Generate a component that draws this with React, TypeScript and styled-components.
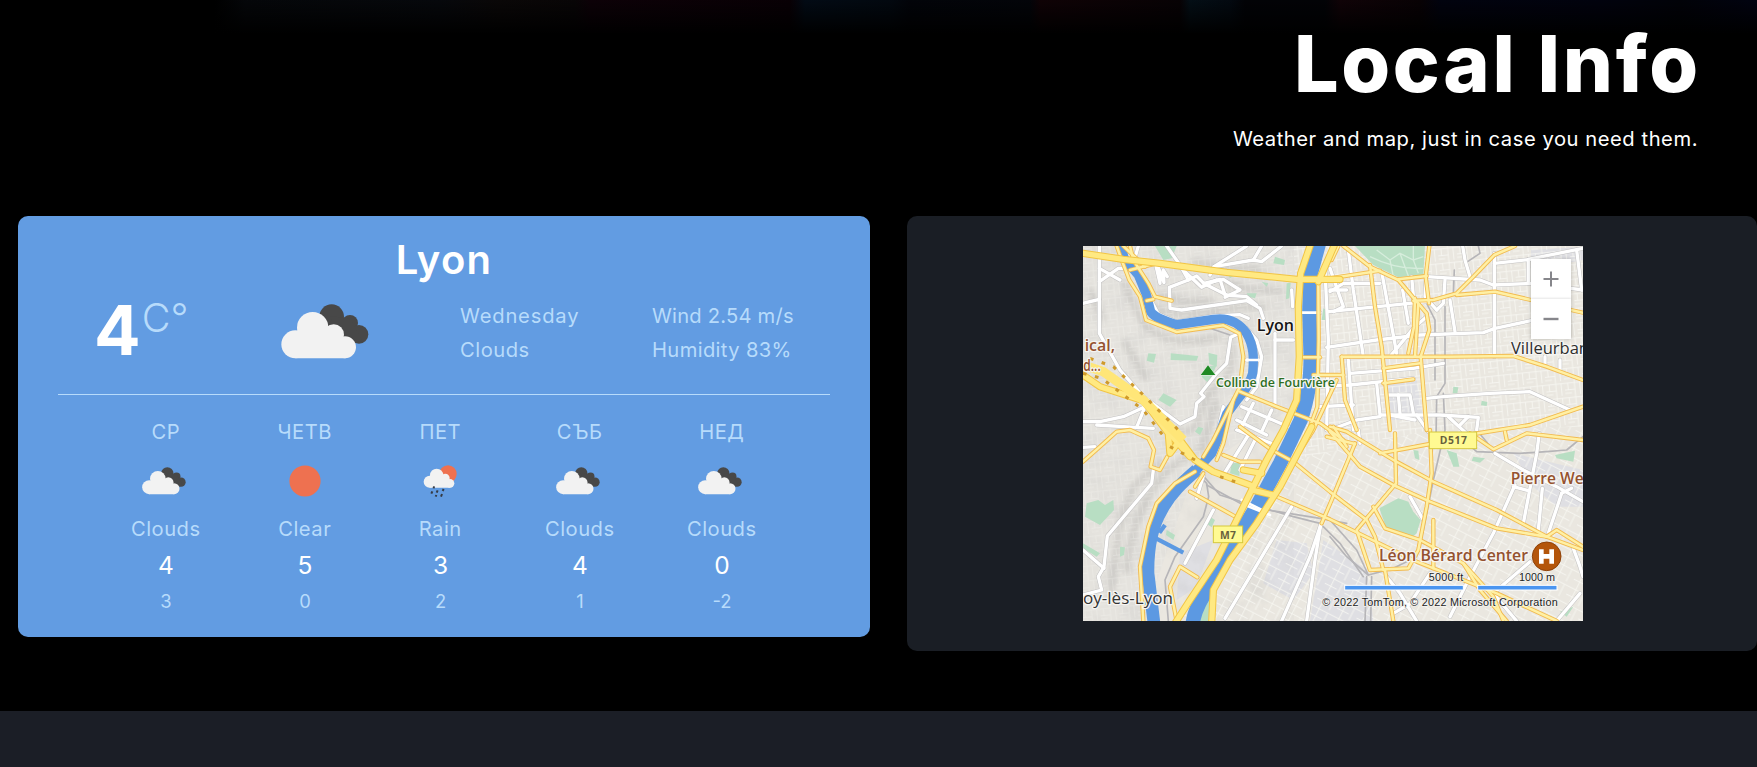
import React from 'react';
import styled, { createGlobalStyle } from 'styled-components';

const GlobalStyle = createGlobalStyle`
  * { box-sizing: border-box; }
  body {
    margin: 0;
    background: #000;
    color: #fff;
    font-family: Inter, "Open Sans", sans-serif;
    overflow: hidden;
  }
`;

const PALE = '#b7dbfb';

const Page = styled.main`
  height: 767px;
  display: flex;
  flex-direction: column;
  background:
    linear-gradient(to bottom, rgba(0, 0, 0, 0.1), #000 34px),
    linear-gradient(to right, #000 215px, #05070a 245px, #07090d 440px, #0b0808 500px, #090607 575px,
      #0e0108 590px, #090005 790px, #020c17 805px, #020911 890px, #02040a 910px, #03050a 1030px,
      #110206 1040px, #080205 1180px, #041018 1190px, #030a12 1230px, #020307 1245px, #020307 1325px,
      #120308 1340px, #090205 1420px, #010310 1440px, #01020f 1600px, #010209 1680px, #010312 1757px);
`;

const Header = styled.header`
  padding: 24px 59px 0 0;
  text-align: right;
`;

const Title = styled.h1`
  margin: 0 -3px 0 0;
  font-size: 79px;
  font-weight: 800;
  line-height: 78px;
  letter-spacing: 2.7px;
`;

const Subtitle = styled.p`
  margin: 22px 0 0;
  font-size: 20.2px;
  line-height: 30px;
  letter-spacing: 0.54px;
`;

const Cards = styled.section`
  display: flex;
  align-items: flex-start;
  gap: 37px;
  margin-top: 62px;
  padding-left: 18px;
`;

const WeatherCard = styled.article`
  width: 852px;
  height: 421px;
  padding: 20px 40px;
  border-radius: 10px;
  background: #629ce2;
`;

const City = styled.h2`
  margin: 0;
  font-size: 40px;
  font-weight: 600;
  line-height: 47px;
  letter-spacing: 1.3px;
  text-align: center;
`;

const Current = styled.div`
  display: grid;
  grid-template-columns: 185px 179px 192px auto;
  align-items: start;
  height: 112px;
  padding: 16px 0 0 38px;
  border-bottom: 1px solid ${PALE};
`;

const Temperature = styled.div`
  display: flex;
  align-items: flex-start;
  margin: -4px 0 0 -2px;
  font-size: 69px;
  font-weight: 700;
  line-height: 70px;
`;

const Unit = styled.span`
  margin: 3px 0 0 1px;
  font-size: 39.5px;
  font-weight: 300;
  line-height: 40px;
  color: ${PALE};
`;

const CurrentIcon = styled.div`
  margin-top: 5px;
  line-height: 0;
`;

const Detail = styled.div<{ $spacing: number }>`
  font-size: 20.2px;
  line-height: 34px;
  letter-spacing: ${(p) => p.$spacing}px;
  color: ${PALE};
`;

const Forecast = styled.div`
  display: grid;
  grid-template-columns: 72px 66px 65px 74px 70px;
  column-gap: 70px;
  padding: 22px 0 0 72px;
`;

const Day = styled.div`
  display: flex;
  flex-direction: column;
  align-items: center;
  white-space: nowrap;
`;

const DayText = styled.span`
  font-size: 20.2px;
  line-height: 30px;
  letter-spacing: 0.5px;
  margin-right: 0.5px;
  color: ${PALE};
`;

const DayIcon = styled.div<{ $nudge: number }>`
  display: flex;
  align-items: center;
  justify-content: center;
  height: 50px;
  margin: 9px 0 8px;
  padding-right: ${(p) => p.$nudge}px;
`;

const High = styled.span`
  margin-top: 3px;
  font-size: 24.5px;
  line-height: 36px;
`;

const Low = styled.span`
  margin-top: 4px;
  font-size: 18.4px;
  line-height: 28px;
  color: ${PALE};
`;

const MapCard = styled.article`
  display: flex;
  justify-content: center;
  width: 850px;
  height: 435px;
  padding: 30px 0;
  border-radius: 10px;
  background: #1a1e25;
`;

const MapFrame = styled.div`
  position: relative;
  width: 500px;
  height: 375px;
  margin-left: 2px;
  overflow: hidden;

  > svg { display: block; }
`;

const ZoomControls = styled.div`
  position: absolute;
  top: 13px;
  left: 448px;
  display: flex;
  flex-direction: column;
  box-shadow: 0 0 4px rgba(0, 0, 0, 0.22);
`;

const ZoomButton = styled.button`
  display: flex;
  align-items: center;
  justify-content: center;
  width: 40px;
  height: 40px;
  padding: 0;
  border: 0;
  background: #fff;

  & + & { box-shadow: 0 -1px 2px rgba(0, 0, 0, 0.1); }
`;

const FooterBand = styled.footer`
  flex: 1;
  margin-top: 60px;
  background: #1b1e26;
`;

function CloudsIcon({ width }: { width: number }) {
  return (
    <svg width={width} height={(width * 166) / 264} viewBox="841 314 264 166">
      <g fill="#484848">
        <circle cx="993" cy="352" r="37" />
        <circle cx="1048" cy="371" r="24" />
        <circle cx="1075" cy="405" r="28" />
        <path d="M990 350L1050 360L1085 425L1060 432L1000 400Z" />
      </g>
      <g fill="#f2f2f2">
        <circle cx="884" cy="435" r="42" />
        <circle cx="936" cy="385" r="47" />
        <circle cx="999" cy="406" r="31" />
        <circle cx="1033" cy="444" r="33" />
        <path d="M884 477V400H1000L1035 430V477Z" />
      </g>
    </svg>
  );
}

function ClearIcon() {
  return (
    <svg width="32" height="32" viewBox="0 0 32 32">
      <circle cx="16" cy="16" r="15.6" fill="#ee7150" />
    </svg>
  );
}

function RainIcon() {
  return (
    <svg width="34" height="33" viewBox="1270 192 102 99">
      <circle cx="1345" cy="219" r="26" fill="#ee7150" />
      <g fill="#f2f2f2">
        <circle cx="1290" cy="242" r="18" />
        <circle cx="1311" cy="223" r="20" />
        <circle cx="1337" cy="231" r="13" />
        <circle cx="1351" cy="247" r="13" />
        <path d="M1290 260V226H1337L1352 240V260Z" />
      </g>
      <path
        d="M1303 256l-1 6M1298 271l-3 7M1314 268l-3 7M1332 264l-3 6M1310 282l-2 5M1327 279l-3 8"
        stroke="#353a44"
        strokeWidth="6"
      />
    </svg>
  );
}

type Kind = 'Clouds' | 'Clear' | 'Rain';

const iconNudge: Record<Kind, number> = { Clouds: 5, Clear: 0, Rain: 1 };

const days: { name: string; kind: Kind; high: string; low: string }[] = [
  { name: 'СР', kind: 'Clouds', high: '4', low: '3' },
  { name: 'ЧЕТВ', kind: 'Clear', high: '5', low: '0' },
  { name: 'ПЕТ', kind: 'Rain', high: '3', low: '2' },
  { name: 'СЪБ', kind: 'Clouds', high: '4', low: '1' },
  { name: 'НЕД', kind: 'Clouds', high: '0', low: '-2' },
];

const SmallMapText = styled.text`
  font: 32.5px "Liberation Sans", Arial, sans-serif;
  fill: #222;
  stroke: #f4f3f0;
  stroke-width: 4px;
  paint-order: stroke;
`;

const PlaceLabel = styled.text<{ $color: string; $size: number; $weight?: number }>`
  font-family: "Open Sans", "Noto Sans", sans-serif;
  font-size: ${(p) => p.$size}px;
  font-weight: ${(p) => p.$weight ?? 400};
  fill: ${(p) => p.$color};
  stroke: #f6f5f2;
  stroke-width: 8px;
  stroke-linejoin: round;
  paint-order: stroke;
`;

const ShieldText = styled.text`
  font: 700 31px "Open Sans", sans-serif;
  fill: #67603c;
`;

const saone =
  'M122 10L132 55L175 105L198 160L212 215C225 235 260 245 290 254L400 238C440 232 475 245 500 280C520 315 523 350 518 400C510 430 495 450 475 475L440 522L412 600L395 640L340 700';
const saoneLower = 'M350 690C310 725 270 760 245 810C215 860 203 930 204 1000L222 1150';
const rhone =
  'M717 10L690 110L688 220L692 350C692 420 685 470 662 540L600 670L530 800L480 880L400 1020C375 1060 345 1100 338 1150';

const whiteRoads = [
  '58,18 58,280 120,390 190,470 300,552 345,530 350,490 372,470 362,460 410,400 440,370 452,292 500,270',
  '9,190 58,178', '58,125 115,85 140,85', '58,85 120,120', '175,18 160,70',
  '260,18 300,75 325,120 268,142 270,205 305,210 500,182 540,205 550,235',
  '325,120 350,108 372,130 420,118 435,165 500,170 530,195', '370,130 440,165',
  '390,105 402,80 500,18', '402,80 520,60 545,65 605,18', '520,60 545,18', '315,95 365,142 410,120',
  '400,125 430,118 480,150 435,172', '215,185 235,222 290,245 400,228 480,224 505,235',
  '228,78 240,130 236,85 252,128 250,90 262,110', '635,150 638,200', '585,280 585,500', '585,300 640,300',
  '9,545 60,545 130,530 195,500', '50,555 130,560 220,565', '195,500 170,562', '500,265 530,300 545,350 530,440 500,480',
  '485,500 625,560', '520,490 480,570', '575,510 545,575', '470,540 560,585', '410,590 430,500',
  '220,690 215,730 82,888 72,980 55,1010 65,1050 9,1065', '9,930 72,985', '9,622 45,620',
  '505,585 430,705', '525,600 480,690', '470,570 580,612', '350,775 372,700', '315,970 400,810',
  '635,800 435,1135', '722,855 690,950 605,1143', '722,855 705,960 680,1143', '665,218 720,218', '500,360 535,360',
  '735,90 745,300 740,570', '750,150 800,150', '745,215 1040,185',
  '740,322 890,300 1020,285 1210,278 1245,265 1353,242', '805,30 820,150 850,350', '750,155 790,130 900,130',
  '905,95 950,340', '750,85 790,200 760,215', '995,110 1010,280', '968,150 985,250', '1038,120 1035,170 1070,210',
  '1040,110 1200,120 1240,135 1353,130', '1148,18 1155,60 1170,110', '1243,40 1243,350', '1243,70 1353,58',
  '1345,58 1509,25', '1490,30 1505,150', '1473,145 1509,150', '1345,58 1345,130', '1095,120 1090,190 1070,210',
  '1110,180 1125,275', '930,350 1000,265 1040,230', '805,360 820,570', '810,400 1000,385 1090,370',
  '720,440 810,435 1000,415', '720,500 820,495', '890,430 900,525 930,525 1080,525 1195,532 1190,570',
  '920,465 990,465 1000,520', '955,465 960,520', '750,570 830,540 900,530', '1040,475 1090,470 1230,460 1350,455 1470,510',
  '1105,530 1170,590', '1165,530 1140,555', '1395,350 1395,375', '1440,360 1440,390', '1010,525 1045,575',
  '930,525 1005,540', '1378,580 1370,640 1330,850', '1245,640 1330,690 1430,740 1509,785',
  '1305,735 1240,880 1165,1020 1110,1130', '1387,745 1375,870', '1445,760 1405,880', '1445,760 1475,745',
  '1300,740 1345,752', '1350,965 1240,1060', '920,1010 960,1060 1010,1143', '1050,1000 990,1090', '940,1120 1010,1080',
  '1480,925 1500,980 1509,1010', '1500,1060 1430,1143', '990,770 1030,840', '835,570 840,610', '1240,1060 1310,1143',
];

const yellowRoads = [
  '110,18 125,60 148,120 180,170 198,240 290,276 430,256 478,280 490,350 480,440 440,520 400,600 370,650',
  '130,18 195,80', '150,18 160,60 205,130 225,170 275,182', '150,90 230,70', '200,182 220,178',
  '480,455 590,500 720,550 790,600', '480,560 575,630 640,665 750,755 860,840 885,890 910,990',
  '460,480 430,610 410,660', '430,645 480,665 540,665', '330,755 470,832', '345,740 370,700', '9,665 60,620 110,575 150,570 205,595 222,630 212,680 240,690 262,650',
  '345,695 285,730 230,790 205,860 180,980 190,1143', '290,1143 270,1040 300,980 352,1012',
  '520,740 750,838 1010,965 1250,1060 1430,1143', '640,665 700,570 770,420', '825,610 755,780 725,850',
  '670,352 720,352', '700,405 790,405', '750,115 900,92',
  '750,560 800,575 940,660 1060,725 1250,810 1400,890 1509,930', '750,575 840,680 940,735 1050,785 1250,865 1400,890',
  '945,580 948,730 830,870 870,990 985,985 1015,930 1040,800 1055,700 1050,570',
  '880,800 915,865 1020,900 1150,970 1200,1050 1280,1143', '1170,580 1240,628 1340,580 1509,600',
  '900,640 1050,612', '915,990 940,1143', '740,590 825,612', '1150,970 1240,1070 1270,1143',
  '790,18 870,80 955,120 1040,220 1048,270 1022,350 1040,570', '870,75 885,200 905,320 930,570',
  '1048,18 1037,110 1047,190', '955,118 1040,108', '1305,18 1243,45 1180,110 1130,160 1060,180 1000,182',
  '1005,175 1002,260 985,340', '1015,190 1005,350', '1130,165 1245,155 1353,180 1473,210 1509,218',
  '785,350 1100,350 1300,348 1400,380 1509,420', '785,350 795,480 830,570', '910,385 1020,370', '910,430 1000,418',
  '1180,582 1350,555 1509,500', '775,18 755,60', '715,130 716,300 712,500 690,560', '1275,575 1280,600',
  '760,560 800,620', '1060,840 1060,985', '1400,890 1430,870 1509,920',
];

const wideRoads = [
  '9,40 130,58 240,70 440,97 650,118 780,118',
  '690,18 662,100 655,200 658,350 650,480 610,570 560,660 515,750 450,880 410,960 330,1080 285,1150',
  '762,18 715,125', '9,405 60,440 190,482 220,520 265,580 270,640 300,600 345,660 400,695 510,735',
  '695,560 600,740 530,850 450,960 400,1050 395,1150', '260,570 330,650', '490,690 545,700', '515,750 580,765',
];

const rails = [
  '340,690 380,730 386,770 370,830 285,950 255,1020 265,1143', '350,685 420,765 500,790 640,830 720,850 780,910 850,1010',
  '380,735 500,800 720,835 800,850', '1035,180 1065,240 1065,420', '1095,200 1095,430 1070,470 1068,600',
  '1090,460 1095,570 1060,720 1030,870 1010,950 940,985 865,1005 800,950 750,890', '865,1005 830,930 750,840',
  '1190,570 1245,637 1320,640 1400,635 1460,630 1509,590', '1120,160 1123,90', '1155,70 1200,40 1195,18',
  '860,1010 855,1143', '875,1010 872,1143', '1150,600 1190,635 1245,637', '390,265 450,285',
];

const parks = [
  'M225 18H290L275 55L250 60Z', 'M825 18L1035 18L1030 105L955 112L880 75Z', 'M585 50L615 60L612 75L580 70Z',
  'M272 340L355 348L350 362L272 360Z', 'M385 338L412 345L410 380L388 372Z', 'M205 340L228 342L222 368L200 362Z',
  'M250 460L290 480L270 500L235 480Z', 'M355 560L370 565L360 585L345 575Z', 'M20 790L55 780L75 795L100 780L102 810L60 855L15 830Z',
  'M120 920L135 922L132 945L120 950Z', 'M455 670L480 668L478 708L450 700Z', 'M390 830L405 840L395 862L378 850Z',
  'M730 205L748 215L742 240L725 240Z', 'M898 805L955 775L985 785L1000 815L1022 840L1010 880L990 897L920 868Z',
  'M1425 645L1485 632L1480 665L1430 655Z', 'M1120 440L1135 442L1132 460L1118 460Z', 'M1205 482L1222 486L1220 498L1203 496Z',
  'M1180 650L1215 655L1200 668L1175 662Z', 'M1100 630L1130 640L1138 680L1120 680Z', 'M260 870L285 885L280 900L258 885Z',
  'M375 1060L390 1080L385 1143H355Z', 'M620 130L632 128L628 175L618 178Z', 'M9 910L60 940L50 950L9 925Z',
  'M500 160L530 160L525 175L505 170Z', 'M1000 630L1015 632L1018 660L1005 655Z', 'M440 100L460 108L450 115Z',
  'M380 380L410 375L385 430L365 410Z', 'M1440 1115L1480 1100L1460 1130Z', 'M545 125L565 130L560 140Z',
];

function Roads({ lines, color, width }: { lines: string[]; color: string; width: number }) {
  return (
    <g fill="none" stroke={color} strokeWidth={width} strokeLinejoin="round" strokeLinecap="round">
      {lines.map((points, i) => (
        <polyline key={i} points={points} />
      ))}
    </g>
  );
}

function CityMap() {
  return (
    <svg width="500" height="375" viewBox="9 18 1500 1125">
      <defs>
        <filter id="soft" x="-20%" y="-20%" width="140%" height="140%">
          <feGaussianBlur stdDeviation="9" />
        </filter>
        <filter id="relief" x="0" y="0" width="100%" height="100%">
          <feTurbulence type="fractalNoise" baseFrequency="0.014" numOctaves="4" seed="8" />
          <feColorMatrix values="0 0 0 0 .5  0 0 0 0 .5  0 0 0 0 .5  1.7 0 0 0 -.72" />
        </filter>
        <pattern id="streets" width="56" height="44" patternUnits="userSpaceOnUse" patternTransform="rotate(-6)">
          <path d="M0 8H56M0 28H30M30 0V44M10 8V28M46 8V44M0 38H20" stroke="#f8f7f3" strokeWidth="2.4" fill="none" />
        </pattern>
        <pattern id="streetsTilted" width="66" height="50" patternUnits="userSpaceOnUse" patternTransform="rotate(27)">
          <path d="M0 10H66M0 34H40M20 0V50M48 10V50" stroke="#f8f7f3" strokeWidth="2.4" fill="none" />
        </pattern>
      </defs>

      <rect x="9" y="18" width="1500" height="1125" fill="#eae7e0" />
      <path d="M9 18H700L640 500L340 700L190 1143H9Z" fill="#e5e3de" />
      <g fill="#dfdfe3">
        <path d="M920 420H1010L1030 540H920Z" />
        <path d="M590 900L680 910L700 1000L640 1080L550 1030Z" />
        <path d="M730 900L860 990L880 1143H690Z" />
        <path d="M1300 640L1509 690V800L1430 800L1360 740Z" />
        <path d="M300 940L400 900L350 1040L290 1080Z" />
        <path d="M1353 30L1509 20V60L1353 90Z" />
      </g>
      <path d="M9 18H640V500L350 690L180 960V1143H9Z" filter="url(#relief)" opacity="0.3" />
      <g fill="none" stroke="#b9b7b4" strokeWidth="13" filter="url(#soft)" opacity="0.75">
        <path d="M200 190Q270 240 400 215T560 205" />
        <path d="M225 160Q300 200 400 180" />
        <path d="M340 65Q440 90 540 90M420 120Q520 160 610 150" />
        <path d="M130 120Q160 200 190 250Q260 330 420 290" />
        <path d="M450 300Q470 400 420 430T350 560Q300 600 240 540" />
        <path d="M340 640Q240 690 190 800T140 1000" />
        <path d="M250 660L160 740L120 850L90 1080" />
        <path d="M130 300L200 420M410 480L360 640M30 150L70 240" />
      </g>
      <path d="M640 18H1509V560L1050 570L640 660L660 300Z" fill="url(#streets)" />
      <path d="M640 660L1050 570L1509 560V1143H300Z" fill="url(#streetsTilted)" />
      <path d="M9 18H640L620 500L340 700L190 1143H9Z" fill="url(#streets)" opacity="0.35" />

      <g fill="#b8dec3">
        {parks.map((d, i) => <path key={i} d={d} />)}
      </g>
      <g fill="none" stroke="#d6eddc" strokeWidth="4">
        <path d="M890 30L930 60L960 40L1000 60L1030 50M930 60L940 110M960 40L985 108M870 50Q950 90 1030 85M1000 18L1000 60L1015 100" />
      </g>

      <Roads lines={rails} color="#b6b5b8" width={5} />
      <Roads lines={whiteRoads} color="#c2c1c1" width={13} />
      <Roads lines={whiteRoads} color="#ffffff" width={10} />

      <g fill="none" stroke="#5c99e2" strokeLinejoin="round">
        <path d={saone} strokeWidth="28" />
        <path d={saoneLower} strokeWidth="38" />
        <path d={rhone} strokeWidth="43" />
        <path d="M228 895L310 938" strokeWidth="13" />
        <path d="M238 878L255 855" strokeWidth="13" />
      </g>
      <Roads lines={['665,218 715,218', '500,360 535,360', '495,795 570,825', '485,780 550,812']} color="#ffffff" width={8} />

      <Roads lines={yellowRoads} color="#f2bb50" width={13} />
      <Roads lines={yellowRoads} color="#fff0a4" width={7.5} />
      <Roads lines={wideRoads} color="#f2c544" width={22} />
      <Roads lines={wideRoads} color="#ffe982" width={16} />
      <path d="M9 375L70 395L190 480L310 600" stroke="#ffe678" strokeWidth="28" fill="none" />
      <path d="M30 355L100 380L190 465L300 575M9 400L65 415L190 510L260 600M270 620L345 660M420 710L480 730" stroke="#cf9a2b" strokeWidth="9" strokeDasharray="11 26" fill="none" />

      <path d="M362 405L384 376L406 405Z" fill="#1f8a24" stroke="#eef3ec" strokeWidth="3" paintOrder="stroke" />
      <PlaceLabel x="530" y="272" $size={51} $weight={600} $color="#161616" textLength={112} lengthAdjust="spacingAndGlyphs">Lyon</PlaceLabel>
      <PlaceLabel x="14" y="333" $size={48} $weight={600} $color="#95522f" textLength={91} lengthAdjust="spacingAndGlyphs">ical,</PlaceLabel>
      <PlaceLabel x="10" y="393" $size={48} $weight={600} $color="#95522f" textLength={52} lengthAdjust="spacingAndGlyphs">d...</PlaceLabel>
      <PlaceLabel x="408" y="440" $size={39} $weight={600} $color="#2c6e22" textLength={357} lengthAdjust="spacingAndGlyphs">Colline de Fourvière</PlaceLabel>
      <PlaceLabel x="1293" y="342" $size={51} $color="#2e2e2e" textLength={234} lengthAdjust="spacingAndGlyphs">Villeurban</PlaceLabel>
      <PlaceLabel x="1292" y="733" $size={47} $weight={600} $color="#95522f" textLength={219} lengthAdjust="spacingAndGlyphs">Pierre We</PlaceLabel>
      <PlaceLabel x="897" y="962" $size={47} $weight={600} $color="#95522f" textLength={447} lengthAdjust="spacingAndGlyphs">Léon Bérard Center</PlaceLabel>
      <PlaceLabel x="9" y="1092" $size={51} $color="#333333" textLength={270} lengthAdjust="spacingAndGlyphs">oy-lès-Lyon</PlaceLabel>

      <g fill="#fffa92" stroke="#d5c83c" strokeWidth="3">
        <rect x="1048" y="576" width="142" height="50" />
        <rect x="400" y="858" width="88" height="50" />
      </g>
      <ShieldText x="1079" y="613" textLength={82}>D517</ShieldText>
      <ShieldText x="420" y="896" textLength={48}>M7</ShieldText>

      <circle cx="1400" cy="949" r="43" fill="#b4560b" stroke="#8f430a" strokeWidth="3" />
      <path d="M1384 928V971M1415 928V971M1384 949H1415" stroke="#fff" strokeWidth="14" fill="none" />

      <SmallMapText x="1046" y="1023" textLength={104}>5000 ft</SmallMapText>
      <SmallMapText x="1317" y="1023" textLength={108}>1000 m</SmallMapText>
      <g fill="#4a95f0" stroke="#fff" strokeWidth="3">
        <rect x="794" y="1036" width="356" height="14" />
        <rect x="1193" y="1036" width="238" height="14" />
      </g>
      <SmallMapText x="727" y="1099" textLength={706}>© 2022 TomTom, © 2022 Microsoft Corporation</SmallMapText>
    </svg>
  );
}

export default function App() {
  return (
    <>
      <GlobalStyle />
      <Page>
        <Header>
          <Title>Local Info</Title>
          <Subtitle>Weather and map, just in case you need them.</Subtitle>
        </Header>
        <Cards>
          <WeatherCard>
            <City>Lyon</City>
            <Current>
              <Temperature>
                4<Unit>C°</Unit>
              </Temperature>
              <CurrentIcon><CloudsIcon width={88} /></CurrentIcon>
              <div>
                <Detail $spacing={0.8}>Wednesday</Detail>
                <Detail $spacing={0.5}>Clouds</Detail>
              </div>
              <div>
                <Detail $spacing={0.2}>Wind 2.54 m/s</Detail>
                <Detail $spacing={0.35}>Humidity 83%</Detail>
              </div>
            </Current>
            <Forecast>
              {days.map((day) => (
                <Day key={day.name}>
                  <DayText>{day.name}</DayText>
                  <DayIcon $nudge={iconNudge[day.kind]}>
                    {day.kind === 'Clouds' && <CloudsIcon width={44} />}
                    {day.kind === 'Clear' && <ClearIcon />}
                    {day.kind === 'Rain' && <RainIcon />}
                  </DayIcon>
                  <DayText>{day.kind}</DayText>
                  <High>{day.high}</High>
                  <Low>{day.low}</Low>
                </Day>
              ))}
            </Forecast>
          </WeatherCard>
          <MapCard>
            <MapFrame>
              <CityMap />
              <ZoomControls>
                <ZoomButton aria-label="Zoom in">
                  <svg width="16" height="16" viewBox="0 0 16 16"><path d="M8 0.5V15.5M0.5 8H15.5" stroke="#86868b" strokeWidth="2" /></svg>
                </ZoomButton>
                <ZoomButton aria-label="Zoom out">
                  <svg width="16" height="16" viewBox="0 0 16 16"><path d="M0.5 8H15.5" stroke="#86868b" strokeWidth="2.4" /></svg>
                </ZoomButton>
              </ZoomControls>
            </MapFrame>
          </MapCard>
        </Cards>
        <FooterBand />
      </Page>
    </>
  );
}
